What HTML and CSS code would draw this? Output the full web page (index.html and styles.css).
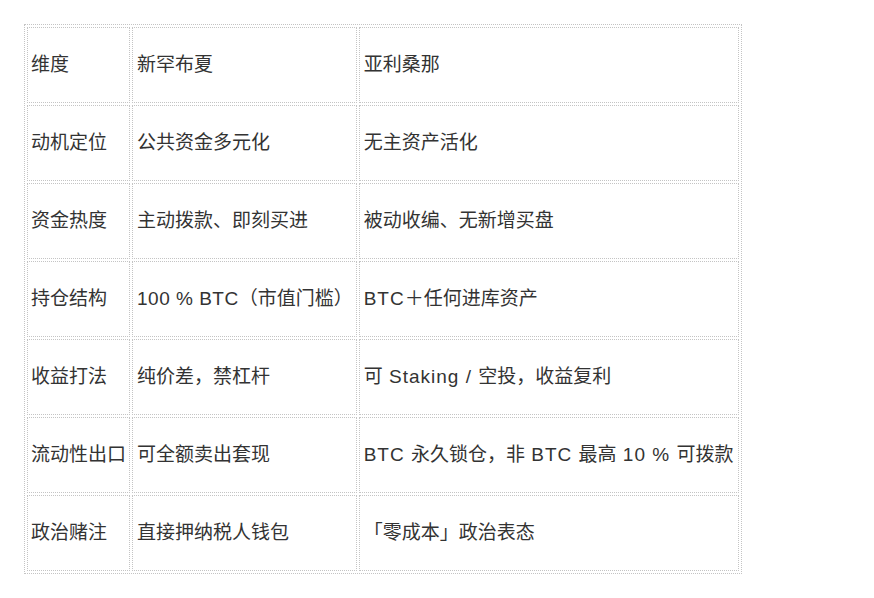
FILE: index.html
```html
<!DOCTYPE html>
<html lang="zh-CN">
<head>
<meta charset="utf-8">
<title>对比</title>
<link rel="stylesheet" href="styles.css">
</head>
<body>
<table class="cmp">
<colgroup><col class="c1"><col class="c2"><col class="c3"></colgroup>
<tbody>
<tr><td>维度</td><td>新罕布夏</td><td>亚利桑那</td></tr>
<tr><td>动机定位</td><td>公共资金多元化</td><td>无主资产活化</td></tr>
<tr><td>资金热度</td><td>主动拨款、即刻买进</td><td>被动收编、无新增买盘</td></tr>
<tr><td>持仓结构</td><td><span class="lat">100 % BTC</span>（市值门槛）</td><td><span class="lat wide">BTC</span>＋任何进库资产</td></tr>
<tr><td>收益打法</td><td>纯价差，禁杠杆</td><td>可<span class="lat wide"> Staking / </span>空投，收益复利</td></tr>
<tr><td>流动性出口</td><td>可全额卖出套现</td><td><span class="lat wide">BTC </span>永久锁仓，非<span class="lat wide"> BTC </span>最高<span class="lat wide"> 10 % </span>可拨款</td></tr>
<tr><td>政治赌注</td><td>直接押纳税人钱包</td><td>「零成本」政治表态</td></tr>
</tbody>
</table>
</body>
</html>
```
FILE: styles.css
```css
html, body {
  margin: 0;
  background: #ffffff;
}
body {
  padding: 24px;
  font-family: "Liberation Sans", "Noto Sans CJK SC", sans-serif;
  font-size: 19px;
  color: #333333;
}
.cmp {
  border: 1px dotted #c4c4c4;
  border-spacing: 2px;
}
.c1 { width: 95px; }
.c2 { width: 214px; }
.c3 { width: 380px; }
.cmp td {
  border: 1px dotted #c4c4c4;
  padding: 3px 3px 3px 4px;
  height: 68px;
  vertical-align: middle;
  white-space: nowrap;
  line-height: 26px;
}
.cmp td:first-child {
  padding-left: 3px;
}
.lat {
  letter-spacing: 0.5px;
}
.lat.wide {
  letter-spacing: 1px;
}
```
